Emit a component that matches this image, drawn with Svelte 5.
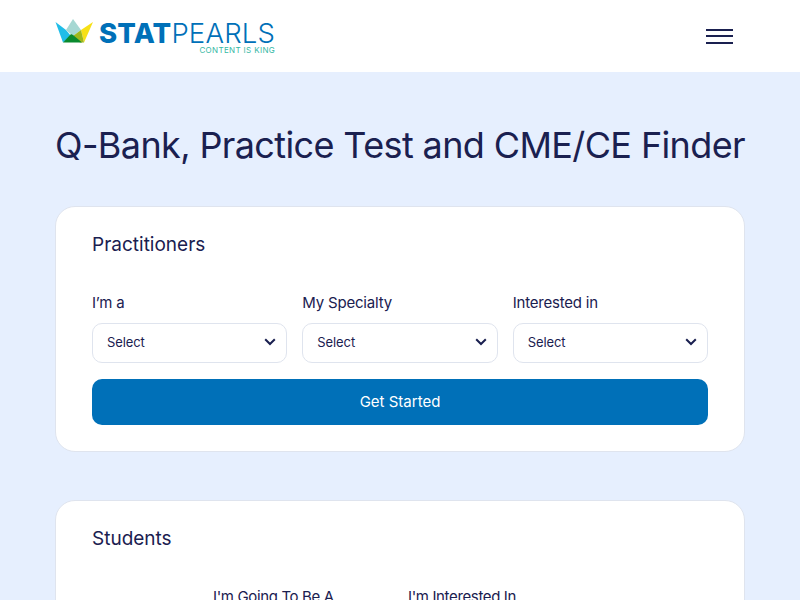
<script>
	const practitioners = ["I’m a", 'My Specialty', 'Interested in'];
	const students = ['', "I'm Going To Be A", "I'm Interested In"];
</script>

<div class="page">
	<header class="topbar">
		<a class="logo" href="#top">
			<svg class="crown" width="38" height="24" viewBox="0 0 38 24">
				<polygon points="0.5,3 11,11 16,17 8,23.5" fill="#20bde8" />
				<polygon points="18,0 11,11 18,17 26,11" fill="#a6d8d3" />
				<polygon points="38,3 26,11 29,23.5" fill="#f7e017" />
				<polygon points="26,11 18,17 25,23.5 29,23.5" fill="#9fb81c" />
				<polygon points="16,15 8,23.5 27,23.5 18,16" fill="#0a8a2e" />
			</svg>
			<span class="wordmark">
				<span class="name"><b>STAT</b>PEARLS</span>
				<span class="tagline">CONTENT IS KING</span>
			</span>
		</a>
		<button class="menu" aria-label="Menu">
			<span></span><span></span><span></span>
		</button>
	</header>

	<main class="content">
		<h1>Q-Bank, Practice Test and CME/CE Finder</h1>

		<section class="card">
			<h2>Practitioners</h2>
			<div class="fields">
				{#each practitioners as label}
					<div class="field">
						<span class="label">{label}</span>
						<div class="select">
							Select
							<svg width="12" height="8" viewBox="0 0 12 8"><path d="M1.2 1.2 6 6l4.8-4.8" fill="none" stroke="#1a2050" stroke-width="2" /></svg>
						</div>
					</div>
				{/each}
			</div>
			<button class="go">Get Started</button>
		</section>

		<section class="card">
			<h2>Students</h2>
			<div class="fields offset">
				{#each students as label}
					<div class="field">
						<span class="label">{label}</span>
					</div>
				{/each}
			</div>
		</section>
	</main>
</div>

<style>
	:global(body) {
		margin: 0;
		font-family: Inter, 'Liberation Sans', sans-serif;
		color: #1a2050;
	}

	.page {
		height: 600px;
		overflow: hidden;
		background: #e6effe;
	}

	.topbar {
		height: 72px;
		background: #fff;
		display: flex;
		align-items: center;
		justify-content: space-between;
		padding: 0 67px 0 55px;
	}

	.logo {
		display: flex;
		gap: 6px;
		align-items: flex-start;
		text-decoration: none;
	}

	.wordmark {
		display: flex;
		flex-direction: column;
		align-items: flex-end;
		margin-top: 2px;
	}

	.name {
		font-size: 27.5px;
		line-height: 25px;
		font-weight: 300;
		letter-spacing: 0.2px;
		color: #0070b8;
	}

	.name b {
		font-weight: 800;
	}

	.tagline {
		font-size: 8px;
		line-height: 8px;
		letter-spacing: 0.35px;
		color: #35b8a4;
	}

	.menu {
		width: 27px;
		height: 15px;
		padding: 0;
		border: 0;
		background: none;
		display: flex;
		flex-direction: column;
		justify-content: space-between;
	}

	.menu span {
		height: 2px;
		background: #1a2050;
	}

	.content {
		padding: 50px 55px 0;
	}

	h1 {
		margin: 0 0 38px;
		font-size: 36px;
		line-height: 46px;
		font-weight: 400;
		letter-spacing: -0.62px;
		white-space: nowrap;
	}

	.card {
		background: #fff;
		border: 1px solid #dfe4ee;
		border-radius: 20px;
		padding: 26px 36px;
		margin-bottom: 48px;
	}

	h2 {
		margin: 0 0 36px;
		font-size: 19px;
		line-height: 24px;
		font-weight: 400;
	}

	.fields {
		display: grid;
		grid-template-columns: repeat(3, 1fr);
		gap: 15px;
	}

	.fields.offset {
		grid-template-columns: 106px 180px 1fr;
		letter-spacing: -0.35px;
	}

	.label {
		display: block;
		font-size: 15px;
		line-height: 20px;
		letter-spacing: -0.2px;
		margin-bottom: 10px;
	}

	.offset .label {
		letter-spacing: -0.36px;
	}

	.select {
		height: 36px;
		border: 1px solid #dfe4ee;
		border-radius: 10px;
		padding: 0 10px 2px 14px;
		display: flex;
		align-items: center;
		justify-content: space-between;
		font-size: 13px;
		letter-spacing: -0.1px;
	}

	.go {
		width: 100%;
		height: 46px;
		margin-top: 16px;
		padding-bottom: 3px;
		border: 0;
		border-radius: 10px;
		background: #0070b8;
		color: #fff;
		font: inherit;
		font-size: 15px;
	}
</style>
